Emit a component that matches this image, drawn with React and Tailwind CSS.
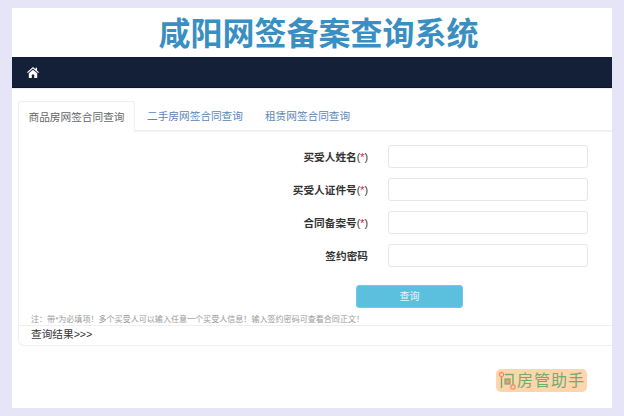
import React from "react";

const cjk = { fontFamily: '"Liberation Sans", "Noto Sans CJK SC", sans-serif' };

function Row({ label, required }) {
  return (
    <div className="flex items-center h-[23px]">
      <div className="w-[349px] pt-[1px] text-right text-[10.67px] font-bold text-[#333] leading-none">
        {label}
        {required && (
          <span className="font-normal">
            (<span className="text-[#e0143c]">*</span>)
          </span>
        )}
      </div>
      <div className="w-[20px]" />
      <input className="w-[200px] h-[23px] bg-white border border-[#e6e6e6] rounded-[3px] outline-none" />
    </div>
  );
}

export default function App() {
  return (
    <div className="w-[624px] h-[416px] bg-[#e5e5f7] pl-3 pr-3 pt-2 pb-2 overflow-hidden" style={cjk}>
      <div className="w-[600px] h-[400px] bg-white flex flex-col overflow-hidden">
        <div className="h-[49px] flex items-center justify-center text-[32px] font-bold text-[#3a8fc2] leading-none pt-[2px] pl-[13px]">
          咸阳网签备案查询系统
        </div>
        <div className="h-[31px] bg-[#142038] border-b border-[#0e1526] flex items-center pl-[15px]">
          <svg width="12" height="11" viewBox="0 0 12 11" fill="#ffffff">
            <path d="M6 0 L8.6 2.3 V0.8 H10 V3.5 L12 5.3 L11.2 6.1 L6 1.6 L0.8 6.1 L0 5.3 Z" />
            <path d="M6 2.7 L10.2 6.3 V11 H7.2 V7.5 H4.8 V11 H1.8 V6.3 Z" />
          </svg>
        </div>
        <div className="h-px bg-[#f0f0f0]" />
        <div className="pl-[6px] pt-[12px]">
          <div className="flex h-[31px] border-b-2 border-[#f0f0f2] text-[10.67px]">
            <div className="w-[117px] h-[31px] bg-white border border-b-0 border-[#efefef] rounded-t-[3px] flex items-center justify-center text-[#666]">
              商品房网签合同查询
            </div>
            <div className="h-[29px] flex items-center text-[#5b87b8] pl-[12px]">
              二手房网签合同查询
            </div>
            <div className="h-[29px] flex items-center text-[#5b87b8] pl-[22px]">
              租赁网签合同查询
            </div>
          </div>
          <div className="h-[214px] border-l border-b border-[#efefef] rounded-bl-[6px] flex flex-col">
            <div className="pt-[13px] flex flex-col gap-[10px]">
              <Row label="买受人姓名" required />
              <Row label="买受人证件号" required />
              <Row label="合同备案号" required />
              <Row label="签约密码" />
            </div>
            <div className="mt-[18px] pl-[337px]">
              <div className="w-[107px] h-[23px] bg-[#5bc0de] border border-[#6fcbe6] rounded-[3px] flex items-center justify-center text-[10px] text-[#e8f7fb]">
                查询
              </div>
            </div>
            <div className="pl-[12px] mt-[6px] h-[11px] text-[8.05px] leading-[11px] text-[#999] whitespace-nowrap">
              注：带*为必填项！多个买受人可以输入任意一个买受人信息！输入签约密码可查看合同正文！
            </div>
            <div className="border-t border-[#efefef] pl-[12px] h-[21px] text-[10.67px] leading-[16px] text-[#333]">
              查询结果&gt;&gt;&gt;
            </div>
          </div>
        </div>
        <div className="flex justify-end pr-[25px] pt-[23px]">
          <div className="relative w-[91px] h-[23px] bg-[#fed5ad] rounded-[5px] flex items-center pl-[2px] text-[#6fae6a] text-[16px] leading-none">
            <svg width="18" height="19" viewBox="0 0 18 19" fill="none" className="shrink-0">
              <path d="M3.5 5v12M7 3.5h8v13" stroke="#6fae6a" strokeWidth="1.4" />
              <rect x="7" y="8" width="5" height="5" stroke="#6fae6a" strokeWidth="1.2" fill="#f39a70" />
              <circle cx="3.5" cy="3.5" r="2.2" stroke="#f58a68" strokeWidth="1.2" fill="#fed5ad" />
              <circle cx="15" cy="16" r="2.2" stroke="#f58a68" strokeWidth="1.2" fill="#fed5ad" />
            </svg>
            <span className="ml-[1px] tracking-[1px] whitespace-nowrap">房管助手</span>
          </div>
        </div>
      </div>
    </div>
  );
}
